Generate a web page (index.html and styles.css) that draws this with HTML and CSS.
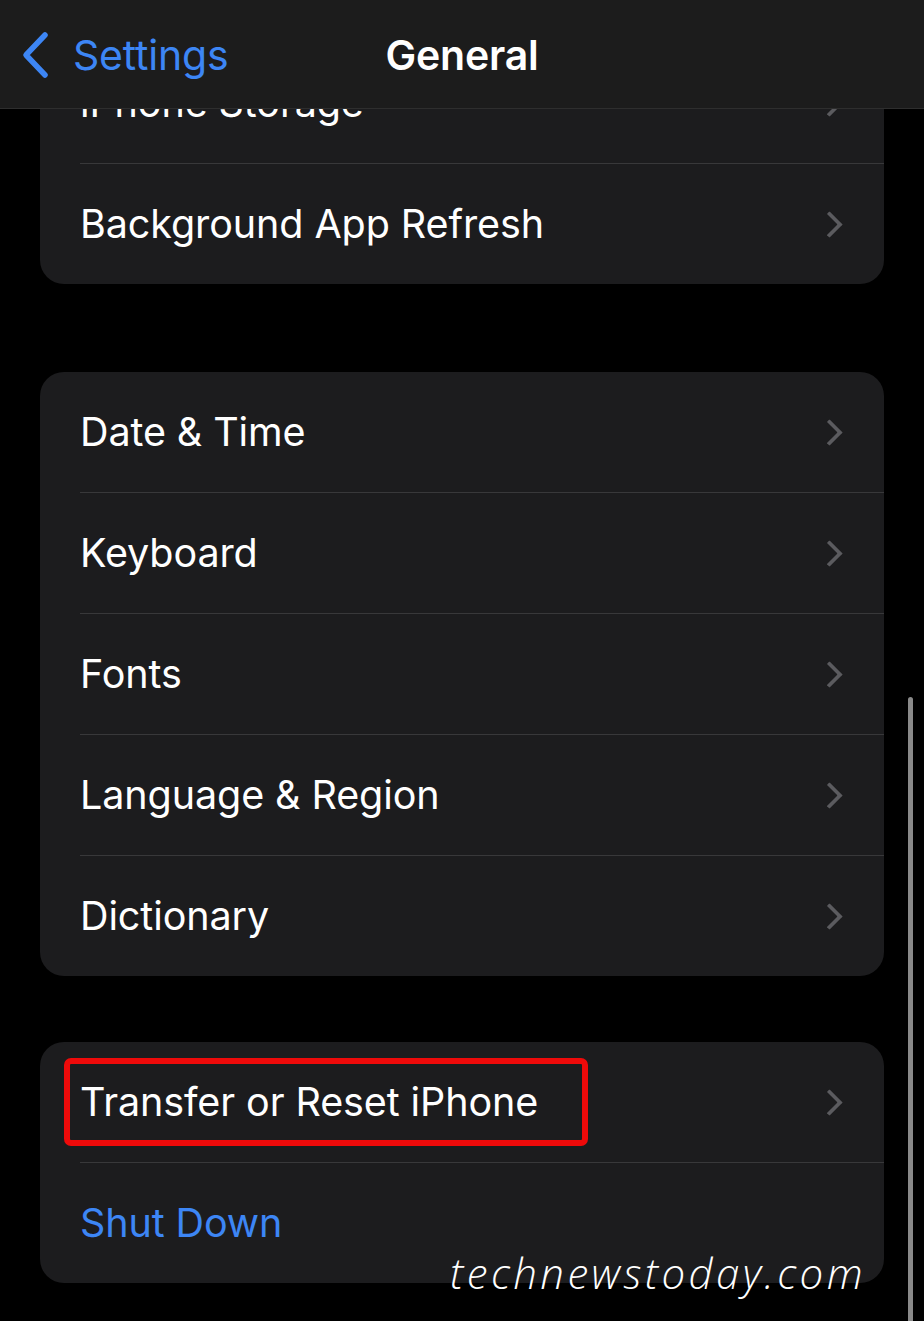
FILE: index.html
```html
<!doctype html>
<html>
  <head>
    <meta charset="utf-8">
    <meta name="viewport" content="width=device-width, initial-scale=1">
    <link rel="stylesheet" href="styles.css">
  </head>
  <body>
    <header class="navbar">
      <a class="back">
        <svg class="back_icon" viewBox="0 0 28 48" width="28" height="48">
          <path d="M24 4 L5 24 L24 44" fill="none" stroke="#3d86f5" stroke-width="5.5" stroke-linecap="round" stroke-linejoin="round"/>
        </svg>
        <span>Settings</span>
      </a>
      <h1 class="title">General</h1>
    </header>

    <main class="list">
      <section class="group">
        <div class="row"><span class="label">iPhone Storage</span><span class="chevron"></span></div>
        <div class="row"><span class="label">Background App Refresh</span><span class="chevron"></span></div>
      </section>

      <section class="group">
        <div class="row"><span class="label">Date &amp; Time</span><span class="chevron"></span></div>
        <div class="row"><span class="label">Keyboard</span><span class="chevron"></span></div>
        <div class="row"><span class="label">Fonts</span><span class="chevron"></span></div>
        <div class="row"><span class="label">Language &amp; Region</span><span class="chevron"></span></div>
        <div class="row"><span class="label">Dictionary</span><span class="chevron"></span></div>
      </section>

      <section class="group last">
        <div class="row">
          <span class="label highlight">Transfer or Reset iPhone</span><span class="chevron"></span>
        </div>
        <div class="row"><span class="label action">Shut Down</span></div>
      </section>
    </main>

    <div class="scrollbar"></div>
    <div class="watermark">technewstoday.com</div>
  </body>
</html>
```

FILE: styles.css
```css
html, body {
  margin: 0;
  padding: 0;
  background: #000;
  color: #fff;
  font-family: "Inter", "Roboto", sans-serif;
  overflow: hidden;
}
body {
  position: relative;
  height: 1321px;
}

/* top bar, sits over the scrolled list */
.navbar {
  position: absolute;
  top: 0;
  left: 0;
  right: 0;
  height: 108px;
  background: #1c1c1c;
  border-bottom: 1px solid #2e2e2e;
  z-index: 2;
  display: flex;
  align-items: center;
  justify-content: center;
}
.back {
  position: absolute;
  left: 21px;
  top: 30px;
  display: flex;
  align-items: center;
  gap: 24px;
  color: #3d86f5;
  font-size: 41px;
  letter-spacing: -0.2px;
}
.back_icon {
  display: block;
}
.title {
  margin: 0;
  margin-top: 2px;
  font-size: 41px;
  font-weight: 600;
  letter-spacing: -0.2px;
}

.list {
  padding: 43px 40px 0 40px;
  display: flex;
  flex-direction: column;
  gap: 88px;
}
.group {
  background: #1c1c1e;
  border-radius: 24px;
  overflow: hidden;
}
.group.last {
  margin-top: -22px;
}
.row {
  height: 120px;
  margin-left: 40px;
  padding-right: 40px;
  display: flex;
  align-items: center;
  justify-content: space-between;
  border-top: 1px solid #38383a;
  box-sizing: border-box;
}
.row:first-child {
  border-top: 0;
}
.group .row + .row {
  height: 121px;
}
.label {
  font-size: 39.5px;
  line-height: 48px;
  letter-spacing: -0.1px;
}
.label.action {
  color: #3d86f5;
}
.label.highlight {
  position: relative;
}
.label.highlight::after {
  content: "";
  position: absolute;
  left: -16px;
  right: -50px;
  top: -20px;
  bottom: -20px;
  border: 6px solid #ee0a0a;
  border-radius: 7px;
}
.chevron {
  width: 15px;
  height: 15px;
  border-top: 4px solid #5b5b5f;
  border-right: 4px solid #5b5b5f;
  border-radius: 1px;
  transform: rotate(45deg);
  margin-right: 5px;
}

.scrollbar {
  position: absolute;
  right: 11px;
  top: 697px;
  bottom: -10px;
  width: 5px;
  border-radius: 3px;
  background: #8a8a8a;
}
.watermark {
  position: absolute;
  left: 450px;
  top: 1244px;
  font-family: "Open Sans", sans-serif;
  font-style: italic;
  font-weight: 300;
  font-size: 42px;
  letter-spacing: 3.4px;
  color: #fff;
}
```
